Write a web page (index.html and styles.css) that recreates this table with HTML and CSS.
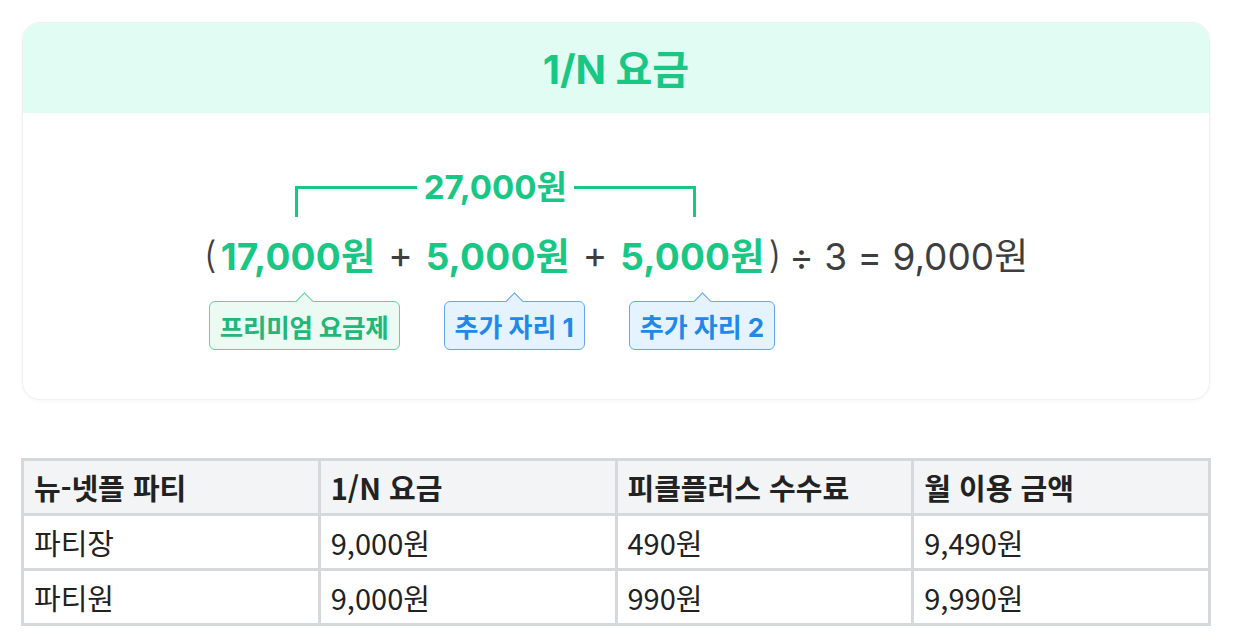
FILE: index.html
```html
<!DOCTYPE html>
<html lang="ko">
<head>
<meta charset="utf-8">
<link rel="stylesheet" href="styles.css">
</head>
<body>
<div class="page">
  <section class="card">
    <header class="card-head">1/N 요금</header>
    <div class="card-body">
      <div class="formula">
        <div class="brace">
          <span class="seg seg-left"></span>
          <span class="brace-label">27,000원</span>
          <span class="seg seg-right"></span>
        </div>
        <div class="equation">
          <span class="paren">(</span>
          <span class="amt">17,000원</span>
          <span class="op">+</span>
          <span class="amt">5,000원</span>
          <span class="op">+</span>
          <span class="amt">5,000원</span>
          <span class="paren close">)</span>
          <span class="rest">÷ 3 = 9,000원</span>
        </div>
        <div class="tags">
          <span class="tag tag-green">프리미엄 요금제</span>
          <span class="tag tag-blue">추가 자리 1</span>
          <span class="tag tag-blue">추가 자리 2</span>
        </div>
      </div>
    </div>
  </section>

  <table class="fee-table">
    <thead>
      <tr><th>뉴-넷플 파티</th><th>1/N 요금</th><th>피클플러스 수수료</th><th>월 이용 금액</th></tr>
    </thead>
    <tbody>
      <tr><td>파티장</td><td>9,000원</td><td>490원</td><td>9,490원</td></tr>
      <tr><td>파티원</td><td>9,000원</td><td>990원</td><td>9,990원</td></tr>
    </tbody>
  </table>
</div>
</body>
</html>
```

FILE: styles.css
```css
* { box-sizing: border-box; }
html, body { margin: 0; padding: 0; background: #ffffff; }
body { font-family: Inter, "Noto Sans CJK KR", sans-serif; }

.page {
  padding: 22px 25px 0 22px;
}

.card {
  border: 1px solid #efefef;
  border-radius: 18px;
  overflow: hidden;
  box-shadow: 0 1px 4px rgba(0, 0, 0, 0.04);
  height: 378px;
}

.card-head {
  background: #e1fcf3;
  height: 90px;
  display: flex;
  align-items: center;
  justify-content: center;
  color: #19c785;
  font-weight: 700;
  font-size: 40px;
  padding-bottom: 3px;
}

.card-body {
  display: flex;
  justify-content: center;
  padding-top: 57px;
}

.formula {
  display: flex;
  flex-direction: column;
}

.brace {
  display: flex;
  align-items: flex-start;
  width: 401px;
  margin-left: 91px;
}
.seg {
  flex: 1;
  height: 31px;
  margin-top: 16px;
  border-top: 3px solid #19c785;
}
.seg-left { border-left: 3px solid #19c785; }
.seg-right { border-right: 3px solid #19c785; }
.brace-label {
  padding: 0 7px;
  font-size: 33px;
  line-height: 34px;
  font-weight: 700;
  color: #19c785;
}

.equation {
  display: flex;
  align-items: center;
  height: 52px;
  margin-top: 11px;
  font-size: 37px;
  color: #3e3e3e;
}
.paren {
  font-weight: 300;
  margin-right: 4px;
}
.paren.close { margin-left: 4px; margin-right: 8px; }
.amt {
  font-weight: 700;
  color: #19c785;
  letter-spacing: 0.2px;
}
.op {
  font-weight: 400;
  margin: 0 13px;
}
.rest { font-weight: 400; }

.tags {
  display: flex;
  gap: 44px;
  margin-top: 21px;
  margin-left: 5px;
}
.tag {
  position: relative;
  height: 49px;
  padding: 0 10px;
  display: flex;
  align-items: center;
  border-radius: 6px;
  font-size: 25.5px;
  font-weight: 700;
  letter-spacing: -0.2px;
}
.tag::before {
  content: "";
  position: absolute;
  left: 50%;
  top: -7px;
  width: 12px;
  height: 12px;
  margin-left: -6px;
  transform: rotate(45deg);
  background: inherit;
  border-top: 1px solid;
  border-left: 1px solid;
  border-color: inherit;
}
.tag-green {
  background: #ebfaf3;
  border: 1px solid #5fd2a3;
  color: #1fb878;
}
.tag-blue {
  background: #e5f2ff;
  border: 1px solid #61a9ef;
  color: #1f88ea;
  font-size: 26px;
  letter-spacing: 0;
}

.fee-table {
  margin-top: 58px;
  width: 1190px;
  margin-left: -1px;
  border-collapse: collapse;
  font-family: "Noto Sans CJK KR", sans-serif;
  font-size: 29px;
  color: #222222;
  table-layout: fixed;
}
.fee-table th, .fee-table td {
  border: 3px solid #d6d9dc;
  text-align: left;
  padding: 0 10px;
  height: 55px;
  line-height: 1.2;
}
.fee-table th {
  background: #f2f4f6;
  font-weight: 700;
}
.fee-table td { font-weight: 400; }
```
